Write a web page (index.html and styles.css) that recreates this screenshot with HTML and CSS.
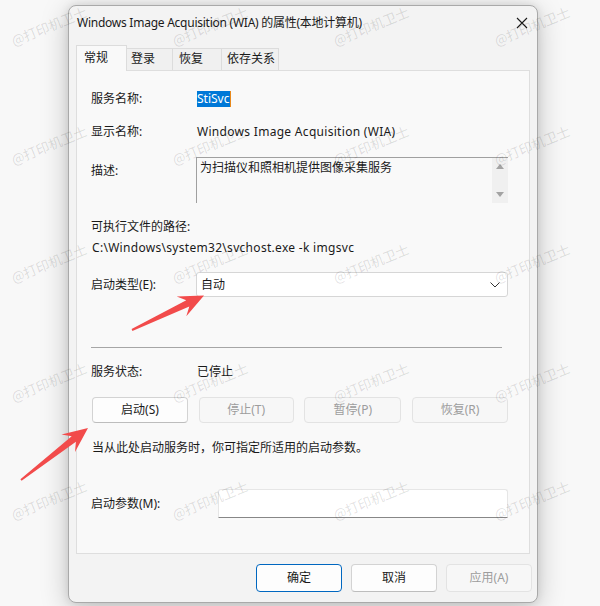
FILE: index.html
```html
<!DOCTYPE html>
<html lang="zh-CN">
<head>
<meta charset="utf-8">
<title>Windows Image Acquisition (WIA) 的属性(本地计算机)</title>
<link rel="stylesheet" href="styles.css">
</head>
<body>
<div class="dialog">
  <div class="titlebar">
    <span class="title">Windows Image Acquisition (WIA) 的属性(本地计算机)</span>
    <svg class="close" width="12" height="12" viewBox="0 0 12 12"><path d="M1 1L11 11M11 1L1 11" stroke="#1a1a1a" stroke-width="1.1" fill="none"/></svg>
  </div>
  <div class="tabs">
    <div class="tab active">常规</div>
    <div class="tab">登录</div>
    <div class="tab">恢复</div>
    <div class="tab">依存关系</div>
  </div>
  <div class="panel">
    <div class="row r-name">
      <span class="label">服务名称:</span>
      <span class="value"><span class="selected">StiSvc</span><span class="caret"></span></span>
    </div>
    <div class="row r-display">
      <span class="label">显示名称:</span>
      <span class="value latin">Windows Image Acquisition (WIA)</span>
    </div>
    <div class="row r-desc">
      <span class="label desc-label">描述:</span>
      <div class="textarea">
        <div class="ta-text">为扫描仪和照相机提供图像采集服务</div>
        <div class="scrollbar">
          <span class="tri up"></span>
          <span class="tri down"></span>
        </div>
      </div>
    </div>
    <div class="line r-pathlabel">可执行文件的路径:</div>
    <div class="line r-path latin">C:\Windows\system32\svchost.exe -k imgsvc</div>
    <div class="row r-type">
      <span class="label">启动类型(E):</span>
      <div class="select">
        <span>自动</span>
        <svg class="chev" width="10" height="6" viewBox="0 0 10 6"><path d="M0.5 0.5L5 5L9.5 0.5" stroke="#333" stroke-width="1" fill="none"/></svg>
      </div>
    </div>
    <div class="divider"></div>
    <div class="row r-status">
      <span class="label">服务状态:</span>
      <span class="value">已停止</span>
    </div>
    <div class="btnrow">
      <button class="btn b1">启动(S)</button>
      <button class="btn b2 disabled">停止(T)</button>
      <button class="btn b3 disabled">暂停(P)</button>
      <button class="btn b4 disabled">恢复(R)</button>
    </div>
    <div class="line r-note">当从此处启动服务时，你可指定所适用的启动参数。</div>
    <div class="row r-param">
      <span class="label">启动参数(M):</span>
      <div class="input"></div>
    </div>
  </div>
  <div class="footer">
    <button class="btn fbtn primary">确定</button>
    <button class="btn fbtn">取消</button>
    <button class="btn fbtn disabled">应用(A)</button>
  </div>
</div>

<div class="watermarks">
  <span>@打印机卫士</span><span>@打印机卫士</span><span>@打印机卫士</span><span>@打印机卫士</span>
  <span>@打印机卫士</span><span>@打印机卫士</span><span>@打印机卫士</span><span>@打印机卫士</span>
  <span>@打印机卫士</span><span>@打印机卫士</span><span>@打印机卫士</span><span>@打印机卫士</span>
  <span>@打印机卫士</span><span>@打印机卫士</span><span>@打印机卫士</span><span>@打印机卫士</span>
  <span>@打印机卫士</span><span>@打印机卫士</span><span>@打印机卫士</span><span>@打印机卫士</span>
</div>

<svg class="arrows" width="600" height="606" viewBox="0 0 600 606">
  <polygon fill="#f24b4b" points="132.4,330.9 189.3,306.5 186.3,316.3 204,295.5 176.7,296.5 186.3,300.3 131.6,329.1"/>
  <polygon fill="#f24b4b" points="21.6,480.8 75.9,441.8 75,452 88,428 61.5,434.6 71.7,436.2 20.4,479.2"/>
</svg>
</body>
</html>
```

FILE: styles.css
```css
* { box-sizing: border-box; }
html, body { margin: 0; }
body {
  width: 600px;
  height: 606px;
  overflow: hidden;
  background: #f8f8f8;
  padding: 5px 0 0 68px;
  font-family: "Noto Sans", "Noto Sans CJK SC", sans-serif;
  font-size: 12px;
  color: #1a1a1a;
  position: relative;
}
.dialog {
  width: 470px;
  height: 598px;
  background: #f3f3f3;
  border: 1px solid #a9a9a9;
  border-radius: 8px;
  box-shadow: 0 6px 28px rgba(0,0,0,0.22), 0 0 8px rgba(0,0,0,0.10);
  display: flex;
  flex-direction: column;
}
.titlebar {
  height: 39px;
  display: flex;
  align-items: center;
  justify-content: space-between;
  padding: 0 9px 5px 8px;
}
.title { font-size: 12px; line-height: 16px; letter-spacing: -0.25px; white-space: nowrap; }
.close { display: block; }
.tabs {
  display: flex;
  align-items: flex-end;
  height: 25px;
  padding-left: 7px;
  position: relative;
  z-index: 1;
}
.tab {
  height: 22px;
  line-height: 20px;
  white-space: nowrap;
  border: 1px solid #dcdcdc;
  border-bottom: none;
  border-left: none;
  background: #f0f0f0;
}
.tab:nth-child(2) { width: 46px; padding-left: 4px; }
.tab:nth-child(3) { width: 49px; padding-left: 6px; }
.tab:nth-child(4) { width: 57px; padding-left: 5px; }
.tab.active {
  width: 51px;
  height: 26px;
  line-height: 23px;
  padding-left: 7px;
  background: #f9f9f9;
  border-left: 1px solid #dcdcdc;
  margin-bottom: -1px;
}
.panel {
  margin: 0 7px;
  height: 484px;
  background: #f9f9f9;
  border: 1px solid #dedede;
  padding: 20px 21px 0 14px;
  display: flex;
  flex-direction: column;
}
.row {
  display: grid;
  grid-template-columns: 105px 1fr;
  align-items: center;
  line-height: 16px;
}
.label { white-space: nowrap; }
.line { line-height: 16px; white-space: nowrap; }
.latin { letter-spacing: 0.3px; }
.value { display: flex; align-items: center; padding-left: 1px; white-space: nowrap; }
.r-name { height: 16px; }
.selected {
  background: #0078d7;
  color: #fff;
  padding: 0 1px 0 0;
  line-height: 16px;
}
.caret { width: 1px; height: 16px; background: #e8891c; }
.r-display { margin-top: 17px; height: 16px; }
.r-desc { margin-top: 17px; align-items: start; }
.desc-label { padding-top: 6px; }
.textarea {
  height: 46px;
  border-top: 1px solid #a0a0a0;
  border-left: 1px solid #a0a0a0;
  display: flex;
  background: #f9f9f9;
}
.ta-text { flex: 1; padding: 2px 0 0 3px; }
.scrollbar {
  width: 16px;
  background: #f0f0f0;
  display: flex;
  flex-direction: column;
  align-items: center;
  justify-content: space-between;
  padding: 6px 0 6px;
}
.tri { width: 0; height: 0; border-left: 4px solid transparent; border-right: 4px solid transparent; }
.tri.up { border-bottom: 5px solid #a3a3a3; }
.tri.down { border-top: 5px solid #a3a3a3; }
.r-pathlabel { margin-top: 16px; }
.r-path { margin-top: 5px; padding-left: 1px; }
.r-type { margin-top: 16px; }
.select {
  height: 25px;
  background: #fff;
  border: 1px solid #d6d6d6;
  border-radius: 3px;
  display: flex;
  align-items: center;
  justify-content: space-between;
  padding: 0 7px 0 4px;
}
.chev { display: block; }
.divider { margin-top: 50px; height: 1px; background: #a6a6a6; width: 411px; }
.r-status { margin-top: 16px; height: 16px; }
.btnrow {
  margin-top: 17px;
  display: flex;
  justify-content: space-between;
  padding-left: 1px;
}
.btn {
  font: inherit;
  width: 96px;
  height: 26px;
  background: #fdfdfd;
  border: 1px solid #d3d3d3;
  border-bottom-color: #bdbdbd;
  border-radius: 4px;
  color: #1a1a1a;
  padding: 0;
  line-height: 22px;
}
.btnrow .b2 { width: 95px; }
.btnrow .b3 { width: 97px; }
.btn.disabled {
  background: #f7f7f7;
  border-color: #e3e3e3;
  color: #9d9d9d;
}
.r-note { margin-top: 17px; padding-left: 1px; }
.r-param { margin-top: 33px; grid-template-columns: 127px 1fr; }
.input {
  height: 29px;
  background: #fff;
  border: 1px solid #e6e6e6;
  border-bottom: 1px solid #878787;
  border-radius: 3px 3px 0 0;
}
.footer {
  margin-top: 10px;
  display: flex;
  justify-content: flex-end;
  gap: 9px;
  padding-right: 5px;
}
.fbtn { width: 86px; height: 28px; }
.fbtn.primary { border: 1px solid #0067c0; }
.watermarks {
  position: absolute;
  left: 0;
  top: 0;
  width: 600px;
  height: 606px;
  overflow: hidden;
  pointer-events: none;
  display: grid;
  grid-template-columns: 161px 161px 161px 1fr;
  grid-template-rows: repeat(5, 118.5px);
  padding: 31px 0 0 15px;
}
.watermarks span {
  display: block;
  font-family: "Noto Sans CJK SC", sans-serif;
  font-size: 13.5px;
  line-height: 18px;
  height: 18px;
  white-space: nowrap;
  color: rgba(0,0,0,0.12);
  transform-origin: 0 100%;
  transform: rotate(-22deg);
}
.arrows {
  position: absolute;
  left: 0;
  top: 0;
  pointer-events: none;
}
```
